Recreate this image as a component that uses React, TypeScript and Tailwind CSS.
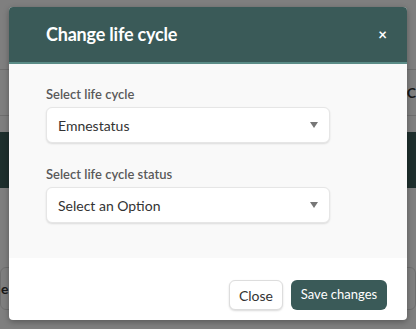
import React from "react";

function Caret() {
  return (
    <svg width="8" height="6" viewBox="0 0 8 6" className="shrink-0">
      <path d="M0 0 L8 0 L4 6 Z" fill="#777" />
    </svg>
  );
}

function SelectBox({ value }: { value: string }) {
  return (
    <div className="flex h-[36px] w-[284px] items-center justify-between rounded-[6px] border border-[#e6e6e6] bg-white pl-[11px] pr-[11px] shadow-[0_1px_2px_rgba(0,0,0,0.12)]">
      <span className="text-[14px] text-[#333]">{value}</span>
      <Caret />
    </div>
  );
}

export default function App() {
  return (
    <div
      className="relative h-[329px] w-[416px] overflow-hidden bg-white"
      style={{ fontFamily: "Lato, 'Open Sans', sans-serif" }}
    >
      {/* background page */}
      <div className="flex flex-col">
        <div className="h-[70px] border-b border-[#ddd]" />
        <div className="flex h-[46px] items-center justify-end border-b border-[#ddd] pr-0">
          <span className="text-[14px] font-bold text-[#333]">e C</span>
        </div>
        <div className="h-[16px]" />
        <div className="h-[56px] bg-[#3c5f5b]" />
        <div className="h-[79px]" />
        <div className="flex h-[43px] items-center rounded-[6px] border border-[#ddd]">
          <span className="text-[14px] font-bold text-[#333]">e c</span>
        </div>
      </div>

      {/* overlay */}
      <div className="absolute inset-0 bg-black/50" />

      {/* modal */}
      <div className="absolute left-[9px] top-[7px] flex h-[313px] w-[398px] flex-col overflow-hidden rounded-[4px] bg-white shadow-[0_2px_6px_rgba(0,0,0,0.3)]">
        <div className="flex h-[57px] items-center justify-between border-b-[2px] border-[#5b8c87] bg-[#3a5a58] pl-[37px] pr-[20px]">
          <h2 className="text-[18px] font-bold tracking-[-0.2px] text-white">Change life cycle</h2>
          <span className="text-[15px] font-bold leading-none text-white">×</span>
        </div>
        <div className="flex h-[194px] flex-col bg-[#f9f9f9] pl-[37px] pt-[22px]">
          <label className="mb-[5px] text-[13px] font-semibold leading-[16px] text-[#5a5a5a]">Select life cycle</label>
          <SelectBox value="Emnestatus" />
          <label className="mb-[5px] mt-[23px] text-[13px] font-semibold leading-[16px] text-[#5a5a5a]">
            Select life cycle status
          </label>
          <SelectBox value="Select an Option" />
        </div>
        <div className="flex flex-1 items-start justify-end gap-[8px] pr-[20px] pt-[22px]">
          <button className="flex h-[30px] w-[54px] items-center justify-center rounded-[6px] border border-[#ddd] bg-white text-[14px] text-[#333] shadow-[0_1px_2px_rgba(0,0,0,0.15)]">
            Close
          </button>
          <button className="flex h-[30px] w-[96px] items-center justify-center rounded-[6px] bg-[#3a5a58] text-[13px] text-white">
            Save changes
          </button>
        </div>
      </div>
    </div>
  );
}
